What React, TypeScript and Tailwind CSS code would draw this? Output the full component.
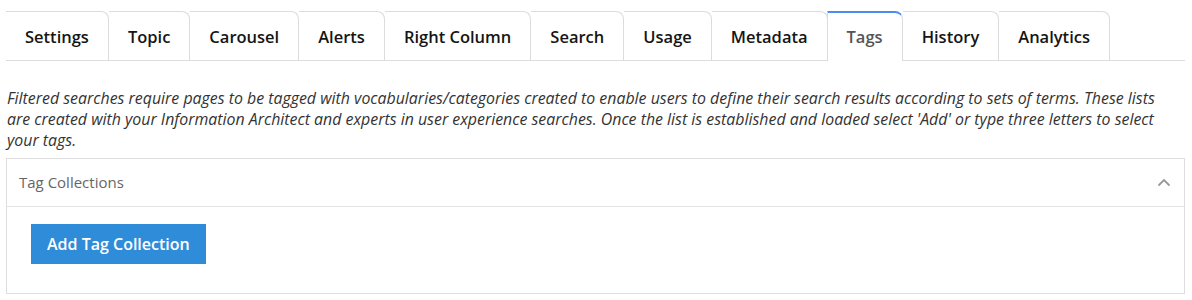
const tabs = [
  'Settings',
  'Topic',
  'Carousel',
  'Alerts',
  'Right Column',
  'Search',
  'Usage',
  'Metadata',
  'Tags',
  'History',
  'Analytics',
]

const active = 'Tags'

export default function App() {
  return (
    <main
      className="w-[1192px] h-[300px] bg-white overflow-hidden pl-[6px] pr-[7px]"
      style={{ fontFamily: '"Open Sans", "Liberation Sans", sans-serif' }}
    >
      {/* Tabs */}
      <div className="pt-[11px] flex border-b border-[#dcdcdc]">
        {tabs.map((t) =>
          t === active ? (
            <div
              key={t}
              className="h-[50px] -mb-px -ml-px px-[19px] pt-[1px] flex items-center bg-white border-l border-r border-[#dcdcdc] border-t-2 border-t-[#4b8cf0] rounded-tr-[8px] text-[16.5px] font-semibold text-[#555]"
            >
              {t}
            </div>
          ) : (
            <div
              key={t}
              className="h-[49px] px-[19px] pt-[2px] flex items-center border-t border-r border-[#dcdcdc] rounded-tr-[8px] text-[16.5px] font-semibold text-[#151515]"
            >
              {t}
            </div>
          )
        )}
      </div>

      {/* Description */}
      <p className="mt-[27px] pl-px pr-[16px] text-[15.9px] leading-[21px] italic text-[#333]">
        Filtered searches require pages to be tagged with vocabularies/categories created to enable users to define their search results according to sets of terms. These lists are created with your Information Architect and experts in user experience searches. Once the list is established and loaded select 'Add' or type three letters to select your tags.
      </p>

      {/* Tag collections panel */}
      <section className="mt-[7px] border border-[#dedede]">
        <div className="h-[48px] px-[12px] flex items-center justify-between border-b border-[#e3e3e3]">
          <span className="text-[15px] text-[#666]">Tag Collections</span>
          <svg width="14" height="9" viewBox="0 0 14 9" className="mr-[1px]">
            <path d="M1.5 7.5 L7 2 L12.5 7.5" fill="none" stroke="#999" strokeWidth="1.8" />
          </svg>
        </div>
        <div className="pt-[17px] pb-[29px] pl-[24px]">
          <button className="h-[40px] px-[16px] bg-[#2f8cd8] text-white text-[16px] font-semibold">
            Add Tag Collection
          </button>
        </div>
      </section>
    </main>
  )
}
